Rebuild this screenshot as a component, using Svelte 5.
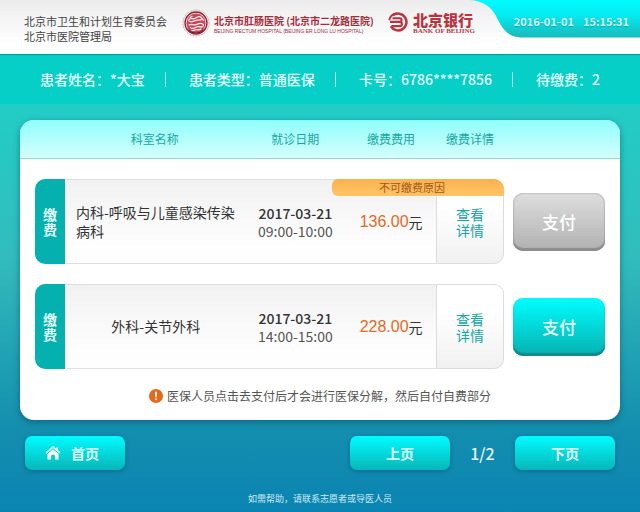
<script>
  // Patient summary shown in the bar under the header
  const patient = [
    { label: '患者姓名', value: '*大宝' },
    { label: '患者类型', value: '普通医保' },
    { label: '卡号', value: '6786****7856' },
    { label: '待缴费', value: '2' }
  ];

  const bills = [
    {
      department: '内科-呼吸与儿童感染传染病科',
      date: '2017-03-21',
      time: '09:00-10:00',
      amount: '136.00',
      blocked: true
    },
    {
      department: '外科-关节外科',
      date: '2017-03-21',
      time: '14:00-15:00',
      amount: '228.00',
      blocked: false
    }
  ];

  let page = $state(1);
  const pageCount = 2;
</script>

<div class="kiosk">
  <header class="header">
    <div class="authority">
      <span>北京市卫生和计划生育委员会</span>
      <span>北京市医院管理局</span>
    </div>

    <div class="hospital">
      <svg class="seal" viewBox="0 0 28 28" aria-hidden="true">
        <circle cx="14" cy="14" r="13" fill="#f8efef" stroke="#a98f93" stroke-width="0.8" stroke-dasharray="1 0.6" />
        <circle cx="14" cy="14" r="11" fill="#fbe9ea" stroke="#8d2436" stroke-width="1.3" />
        <circle cx="14" cy="14" r="9.6" fill="#c4485a" />
        <g fill="none" stroke="#fbe4e6" stroke-width="1.3" stroke-linecap="round">
          <path d="M6.500 11c2-2.600 4.500-.5 6.500-1.500s3-2.600 5-1.800 2.200 2.800.2 3.300-4-.4-5.500.8-3.700 1-5.500.6" />
          <path d="M7 16c2.500-1.500 4 .6 6.500-.2s4-2.200 6.500-1.200 1.400 3.400-.6 3.400-3.500-1.200-5.400.2-4 1.400-5.500.5" />
          <path d="M10 21.500c2 .5 3-1 5-.8s2.500.3 4-.7M20 9.500l1.500 2M8 8.500l2-1" />
        </g>
        <path d="M5.500 18.500a10 10 0 0 0 17 0l-1.500 3.500-3.500 2.300h-7l-3.500-2.300z" fill="#7c1c2d" />
      </svg>
      <div class="hospital-name">
        <strong>北京市肛肠医院 (北京市二龙路医院)</strong>
        <span>BEIJING RECTUM HOSPITAL (BEIJING ER LONG LU HOSPITAL)</span>
      </div>
    </div>

    <div class="bank">
      <svg class="bank-mark" viewBox="0 0 20 20" aria-hidden="true">
        <g fill="none" stroke="#b93440">
          <path d="M2.800 14.200A8.400 8.400 0 1 0 5 3.300" stroke-width="2.500" />
          <path d="M1.200 8.200C2 4.500 5 1.700 9 1.500" stroke-width="1.800" />
          <path d="M4.500 6.300h7.300c2.400 0 2.400 3.600 0 3.600H2M11.800 9.900c2.800 0 2.800 4.200 0 4.200H3.500" stroke-width="2.100" />
        </g>
      </svg>
      <div class="bank-name">
        <strong>北京银行</strong>
        <span>BANK OF BEIJING</span>
      </div>
    </div>

    <div class="clock">
      <svg class="clock-bg" viewBox="0 0 170 38" preserveAspectRatio="none" aria-hidden="true">
        <defs>
          <linearGradient id="clockFill" x1="0" y1="0" x2="0" y2="1">
            <stop offset="0" stop-color="#00fbff" />
            <stop offset="0.4" stop-color="#04ecf0" />
            <stop offset="1" stop-color="#1ab9bb" />
          </linearGradient>
        </defs>
        <path d="M0 0C14 1 21 7 26 16C32 28 37 37 51 37.500H170V0Z" fill="url(#clockFill)" />
      </svg>
      <time>2016-01-01</time>
      <time>15:15:31</time>
    </div>
  </header>

  <ul class="patient">
    {#each patient as item}
      <li>{item.label}：{item.value}</li>
    {/each}
  </ul>

  <main class="panel">
    <table>
      <thead>
        <tr>
          <th class="col-name">科室名称</th>
          <th>就诊日期</th>
          <th>缴费费用</th>
          <th>缴费详情</th>
        </tr>
      </thead>
      <tbody>
        {#each bills as bill}
          <tr>
            <td class="tag"><span>缴费</span></td>
            <td class="name"><span>{bill.department}</span></td>
            <td class="when">
              <span>{bill.date}</span>
              <span class="hours">{bill.time}</span>
            </td>
            <td class="fee"><span class="amount">{bill.amount}</span>元</td>
            <td class="detail">
              {#if bill.blocked}
                <button class="reason" type="button">不可缴费原因</button>
              {/if}
              <a href="#detail">查看详情</a>
            </td>
            <td class="action">
              <button class="pay" type="button" disabled={bill.blocked}>支付</button>
            </td>
          </tr>
        {/each}
      </tbody>
    </table>

    <p class="note">
      <svg viewBox="0 0 14 14" aria-hidden="true">
        <circle cx="7" cy="7" r="7" fill="#e36a1c" />
        <path d="M6 2.800h2L7.700 8.200H6.300z" fill="#fff" />
        <circle cx="7" cy="10.300" r="1" fill="#fff" />
      </svg>
      医保人员点击去支付后才会进行医保分解，然后自付自费部分
    </p>
  </main>

  <nav class="pager">
    <button class="nav-button home" type="button">
      <svg viewBox="0 0 16 14" aria-hidden="true">
        <path d="M8 0L0.500 6.500L1.500 7.500L8 2L14.500 7.500L15.500 6.500L13 4.300V1.500H11.500V3z" fill="#fff" />
        <path d="M8 3.300L2.500 8V13.500H6V9.500Q8 7.500 10 9.500V13.500H13.500V8z" fill="#fff" />
      </svg>
      首页
    </button>
    <button class="nav-button" type="button" onclick={() => (page = Math.max(1, page - 1))}>上页</button>
    <span class="count">{page}/{pageCount}</span>
    <button class="nav-button" type="button" onclick={() => (page = Math.min(pageCount, page + 1))}>下页</button>
  </nav>

  <footer class="help">如需帮助，请联系志愿者或导医人员</footer>
</div>

<style>
  :global(body) {
    margin: 0;
  }

  .kiosk {
    display: flex;
    flex-direction: column;
    min-height: 100vh;
    box-sizing: border-box;
    font-family: 'Noto Sans CJK SC', sans-serif;
    font-size: 14px;
    color: #333;
    background: linear-gradient(#08cfc8 54px, #22cdc6 104px, #32bcbc 50%, #148eae 84%, #0a84b2);
  }

  button {
    border: 0;
    padding: 0;
    font-family: inherit;
    cursor: pointer;
  }

  /* Header */
  .header {
    position: relative;
    display: flex;
    align-items: flex-start;
    height: 54px;
    padding-left: 24px;
    background: linear-gradient(#ececec, #fff 80%);
    box-shadow: 0 1px 1px rgba(0, 90, 90, 0.4);
  }

  .authority {
    display: flex;
    flex: none;
    flex-direction: column;
    width: 158px;
    padding-top: 14px;
    font-size: 11px;
    line-height: 15px;
    white-space: nowrap;
    color: #444;
  }

  .hospital {
    display: flex;
    flex: none;
    gap: 4px;
    width: 206px;
    padding-top: 9px;
  }

  .seal {
    flex: none;
    width: 28px;
    height: 28px;
  }

  .hospital-name,
  .bank-name {
    display: flex;
    flex-direction: column;
    white-space: nowrap;
  }

  .hospital-name {
    padding-top: 5px;
    color: #a62a3c;
  }

  .hospital-name strong {
    font-size: 10px;
    line-height: 13px;
  }

  .hospital-name span {
    font-family: 'Liberation Sans', sans-serif;
    font-size: 5px;
    line-height: 8px;
  }

  .bank {
    display: flex;
    flex: none;
    gap: 5px;
    padding-top: 12px;
    color: #b93440;
  }

  .bank-mark {
    width: 20px;
    height: 20px;
  }

  .bank-name strong {
    font-size: 15px;
    font-weight: 900;
    line-height: 15px;
  }

  .bank-name span {
    font-family: 'Liberation Serif', serif;
    font-size: 7px;
    font-weight: bold;
    line-height: 8px;
  }

  .clock {
    position: relative;
    display: flex;
    justify-content: flex-end;
    gap: 9px;
    margin-left: auto;
    padding-right: 11px;
    font-size: 11px;
    font-weight: bold;
    line-height: 42px;
    white-space: nowrap;
    color: #d5fafa;
    text-shadow: 0 1px 1px rgba(0, 110, 120, 0.4);
  }

  .clock time {
    position: relative;
  }

  .clock-bg {
    position: absolute;
    top: 0;
    right: 0;
    width: 170px;
    height: 38px;
  }

  /* Patient bar */
  .patient {
    display: flex;
    justify-content: space-between;
    align-items: center;
    height: 50px;
    margin: 0;
    padding: 0 40px;
    list-style: none;
    font-weight: 500;
    color: #e4fffc;
    background: #06cfc8;
  }

  .patient li {
    display: flex;
    align-items: center;
    white-space: nowrap;
  }

  .patient li + li::before {
    content: '';
    width: 1px;
    height: 15px;
    margin-right: 23px;
    background: #b5f5f1;
  }

  /* Bill list */
  .panel {
    margin: 16px 20px 0;
    overflow: hidden;
    border-radius: 14px;
    background: #fefffe;
    box-shadow: 0 2px 6px rgba(0, 60, 80, 0.5);
  }

  table,
  thead,
  tbody {
    display: block;
  }

  tr {
    display: grid;
    grid-template-columns: 30px 180fr 102fr 90fr 68px 101px;
    margin: 0 15px;
  }

  thead {
    border-bottom: 1px solid #96d8d2;
    background: linear-gradient(#8ffffc, #d4fefb);
  }

  th {
    padding: 0;
    font-size: 12px;
    font-weight: 400;
    line-height: 38px;
    text-align: center;
    color: #1ba69f;
  }

  .col-name {
    grid-column: 2;
  }

  tbody tr {
    height: 85px;
    margin-top: 20px;
  }

  td {
    display: flex;
    align-items: center;
    justify-content: center;
    padding: 0;
  }

  .tag {
    border-radius: 10px 0 0 10px;
    font-weight: bold;
    line-height: 15px;
    color: #e8fffd;
    background: #05b1af;
  }

  .tag span {
    width: 14px;
  }

  .name,
  .when,
  .fee {
    border: solid #e0e0e0;
    border-width: 1px 0;
    background: linear-gradient(#f1f1f1, #fefefe 80%);
  }

  .name {
    padding: 0 9px 0 11px;
    line-height: 19px;
  }

  .when {
    flex-direction: column;
    line-height: 18px;
    font-weight: 500;
  }

  .hours {
    font-weight: 400;
    color: #555;
  }

  .amount {
    font-family: 'Liberation Sans', sans-serif;
    font-size: 16px;
    color: #e5691f;
  }

  .detail {
    position: relative;
    border: 1px solid #dcdcdc;
    border-radius: 0 10px 10px 0;
    background: linear-gradient(#fff 30%, #f1f1f1);
  }

  .detail a {
    width: 28px;
    line-height: 16px;
    text-decoration: none;
    color: #12a8a4;
  }

  .reason {
    position: absolute;
    top: -1px;
    right: -1px;
    width: 172px;
    height: 17px;
    padding-right: 12px;
    border-radius: 6px 10px 0 6px;
    font-size: 11px;
    line-height: 17px;
    color: #a5561b;
    background: linear-gradient(#f9b24c, #ffc468);
  }

  .action {
    justify-content: flex-end;
  }

  .pay {
    width: 92px;
    height: 58px;
    border-radius: 10px;
    font-size: 17px;
    font-weight: 500;
    color: #e6ffff;
    background: linear-gradient(#00feff, #06b0b0);
    box-shadow: inset 0 -3px 1px #12898b, inset 0 0 1px #4bb;
  }

  .pay:disabled {
    color: #fff;
    background: linear-gradient(#dedede, #b0b0b0);
    box-shadow: inset 0 -3px 1px #8c8c8c, inset 0 0 2px #888;
    cursor: default;
  }

  .note {
    display: flex;
    align-items: center;
    justify-content: center;
    gap: 4px;
    height: 51px;
    margin: 0;
    padding-top: 2px;
    box-sizing: border-box;
    font-size: 12px;
    color: #555;
  }

  .note svg {
    width: 14px;
    height: 14px;
  }

  /* Bottom navigation */
  .pager {
    display: flex;
    align-items: center;
    padding: 16px 25px 0;
  }

  .nav-button {
    display: flex;
    align-items: center;
    justify-content: center;
    width: 100px;
    height: 34px;
    border-radius: 7px;
    font-size: 14px;
    font-weight: bold;
    color: #e2ffff;
    background: linear-gradient(#00fcff, #08b6b8);
    box-shadow: 0 1px 4px rgba(0, 60, 90, 0.45);
  }

  .home {
    gap: 10px;
    margin-right: auto;
    padding-right: 6px;
  }

  .home svg {
    width: 16px;
    height: 14px;
  }

  .count {
    width: 65px;
    font-size: 16px;
    font-weight: 500;
    text-align: center;
    color: #e4f7fb;
  }

  .help {
    padding: 22px 0 6px;
    font-size: 9px;
    line-height: 14px;
    text-align: center;
    color: #cdeaf3;
  }
</style>
